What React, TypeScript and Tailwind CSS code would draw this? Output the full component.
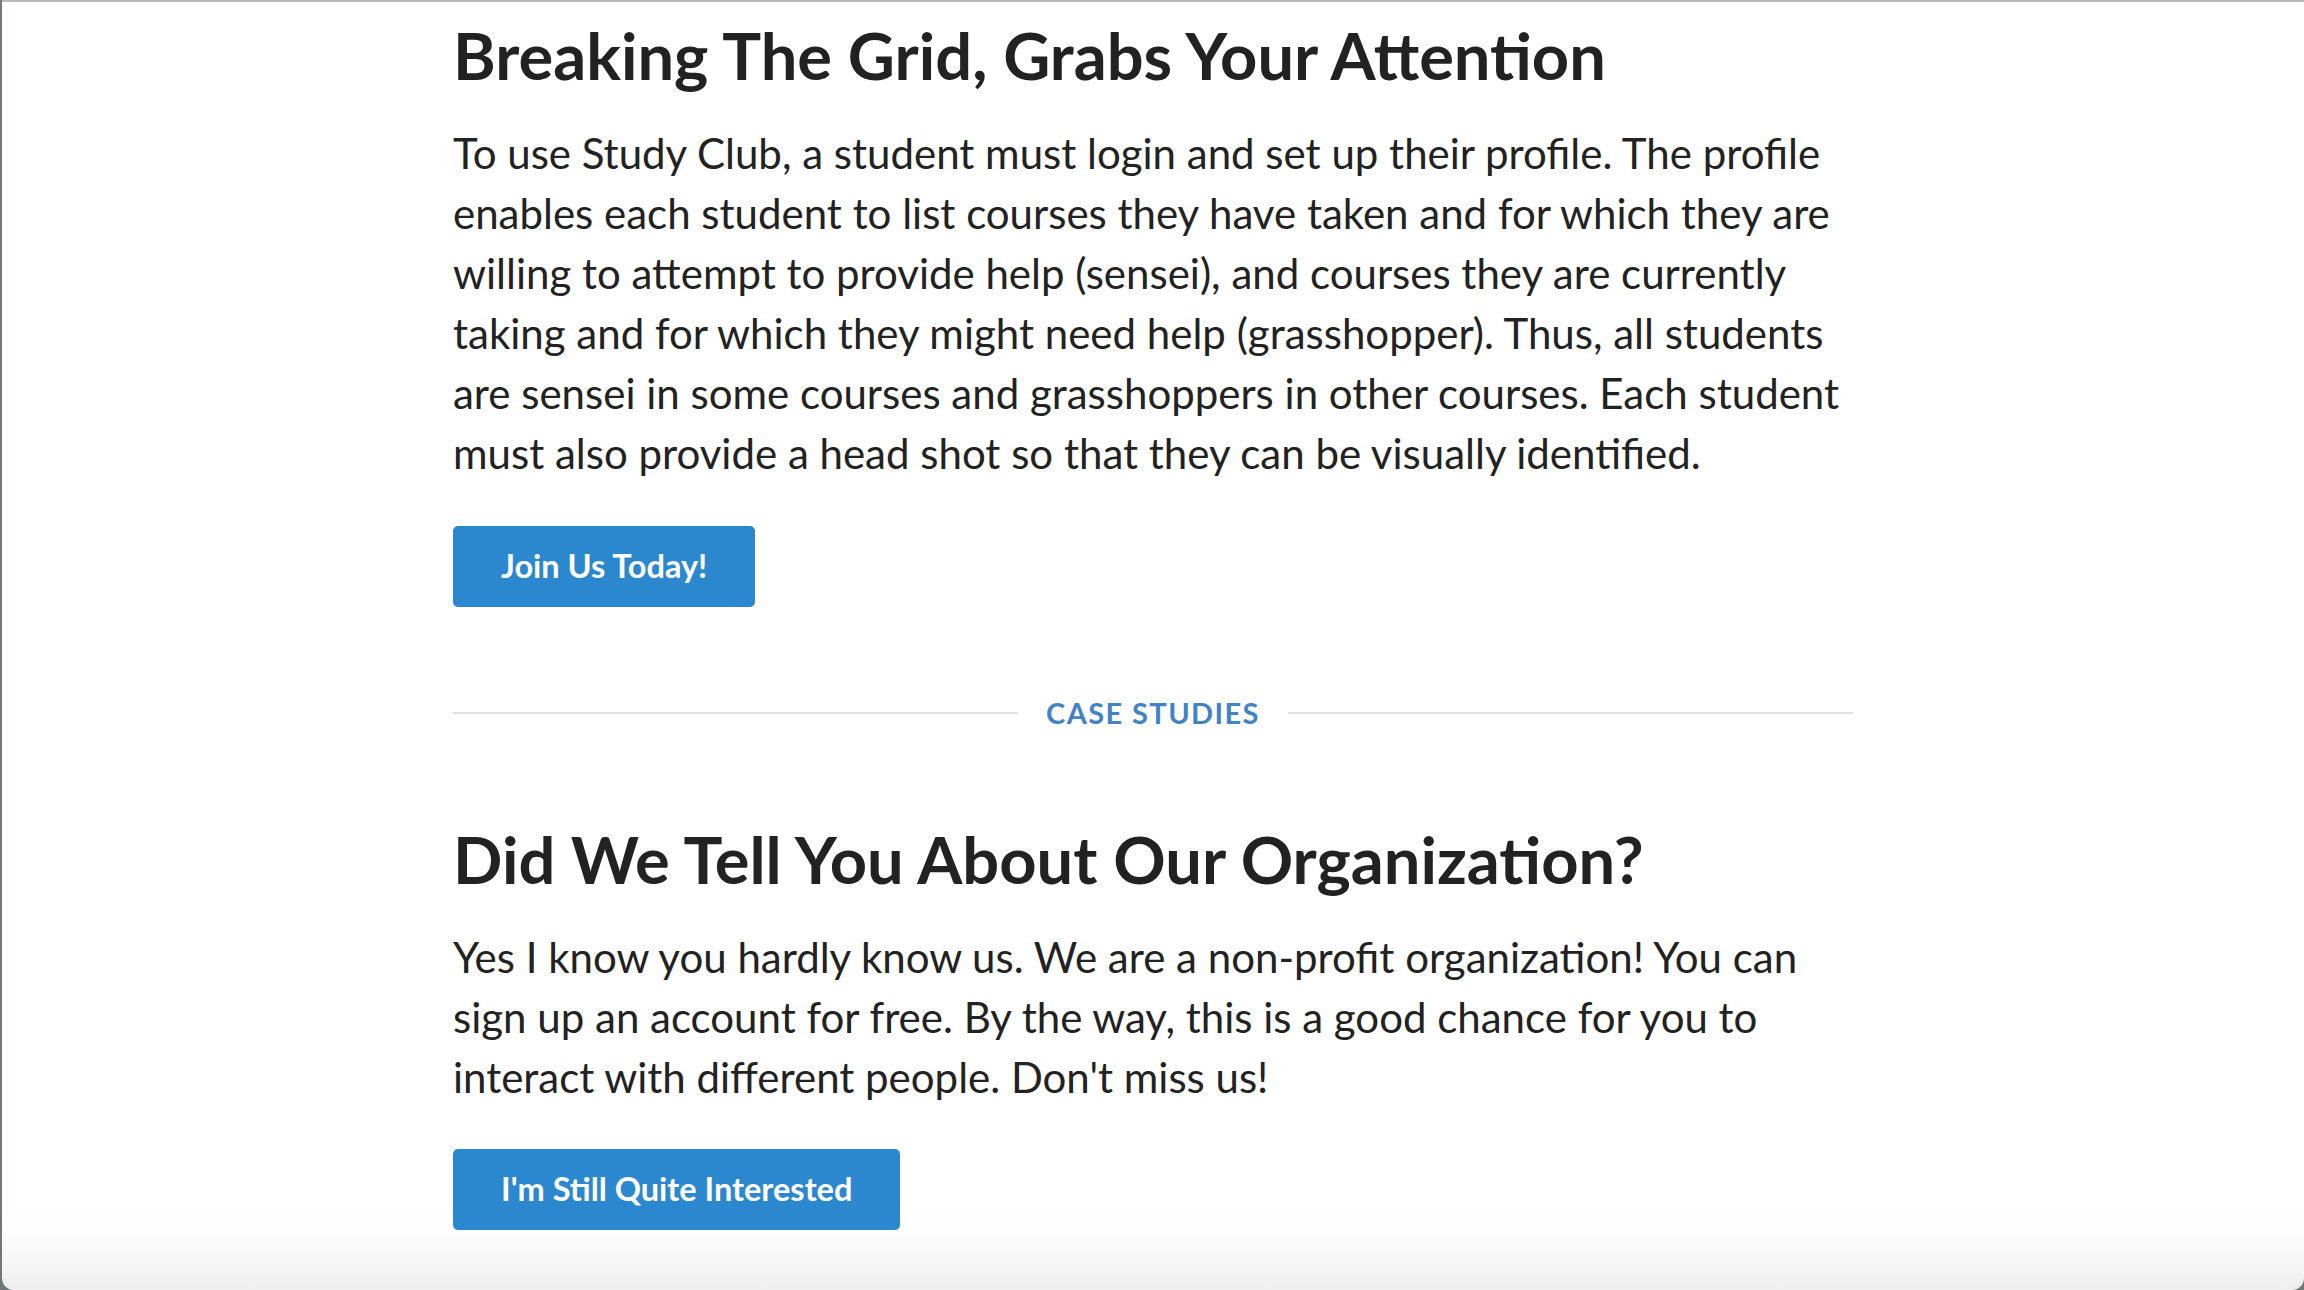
import React from 'react';

const Button: React.FC<{ label: string }> = ({ label }) => (
  <button className="h-[81px] px-[48px] rounded-[5px] bg-[#2b88cf] text-white text-[32.5px] font-bold leading-none">
    {label}
  </button>
);

const App: React.FC = () => {
  return (
    <div className="min-h-[1290px] h-[1290px] w-full bg-[#6f7a78] overflow-hidden">
      <div className="h-full ml-[2px] border-t-[2px] border-[#b9b9b9] rounded-b-[12px] bg-[linear-gradient(to_bottom,#ffffff_1200px,#fcfcfc_1235px,#eeeeee_1290px)] font-['Lato','Open_Sans',sans-serif] text-[#222222]">
        <div className="w-[1400px] mx-auto pt-[11px]">
          {/* Seccion 1 */}
          <h1 className="text-[65px] leading-[84px] font-bold">Breaking The Grid, Grabs Your Attention</h1>
          <p className="mt-[26px] text-[42px] leading-[60px]">
            To use Study Club, a student must login and set up their profile. The profile enables each student to list
            courses they have taken and for which they are willing to attempt to provide help (sensei), and courses they
            are currently taking and for which they might need help (grasshopper). Thus, all students are sensei in some
            courses and grasshoppers in other courses. Each student must also provide a head shot so that they can be
            visually identified.
          </p>
          <div className="mt-[43px]">
            <Button label="Join Us Today!" />
          </div>

          {/* Divisor */}
          <div className="mt-[86px] flex items-center gap-[28px] h-[40px]">
            <div className="flex-1 h-[2px] bg-[#e0e0e0]" />
            <span className="text-[29px] font-bold uppercase tracking-[1.4px] text-[#4183c4]">Case Studies</span>
            <div className="flex-1 h-[2px] bg-[#e0e0e0]" />
          </div>

          {/* Seccion 2 */}
          <h2 className="mt-[84px] text-[65px] leading-[84px] font-bold">Did We Tell You About Our Organization?</h2>
          <p className="mt-[26px] text-[42px] leading-[60px]">
            Yes I know you hardly know us. We are a non-profit organization! You can sign up an account for free. By the
            way, this is a good chance for you to interact with different people. Don't miss us!
          </p>
          <div className="mt-[42px]">
            <Button label="I'm Still Quite Interested" />
          </div>
        </div>
      </div>
    </div>
  );
};

export default App;
